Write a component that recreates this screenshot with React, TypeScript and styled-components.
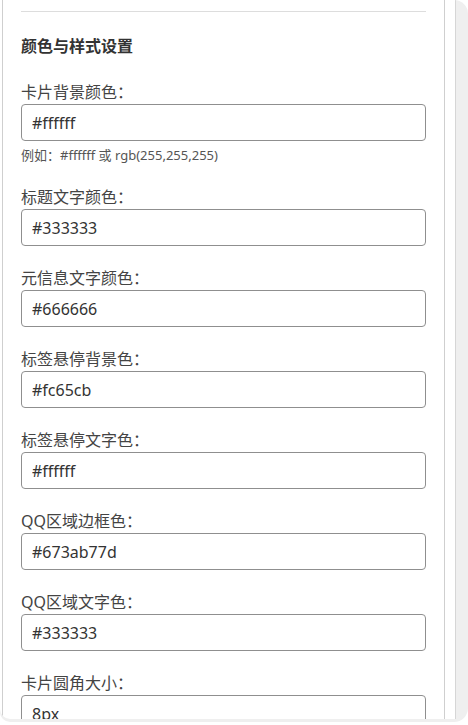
import styled, { createGlobalStyle } from "styled-components"

type Field = {
  label: string
  value: string
  hint?: string
}

const fields: Field[] = [
  { label: "卡片背景颜色：", value: "#ffffff", hint: "例如：#ffffff 或 rgb(255,255,255)" },
  { label: "标题文字颜色：", value: "#333333" },
  { label: "元信息文字颜色：", value: "#666666" },
  { label: "标签悬停背景色：", value: "#fc65cb" },
  { label: "标签悬停文字色：", value: "#ffffff" },
  { label: "QQ区域边框色：", value: "#673ab77d" },
  { label: "QQ区域文字色：", value: "#333333" },
  { label: "卡片圆角大小：", value: "8px" },
]

export default function App() {
  return (
    <>
      <GlobalStyle />
      <Frame>
        <Window>
          <Panel>
            <Section>
              <Heading>颜色与样式设置</Heading>
              {fields.map((f) => (
                <FieldGroup key={f.label}>
                  <Label>{f.label}</Label>
                  <Input type="text" defaultValue={f.value} readOnly />
                  {f.hint && <Hint>{f.hint}</Hint>}
                </FieldGroup>
              ))}
            </Section>
          </Panel>
        </Window>
      </Frame>
    </>
  )
}

const GlobalStyle = createGlobalStyle`
  html, body {
    margin: 0;
    padding: 0;
    background: #ffffff;
    overflow: hidden;
  }
  body {
    font-family: "Noto Sans", "Noto Sans CJK SC", sans-serif;
  }
`

const Frame = styled.div`
  width: 468px;
  height: 722px;
  box-sizing: border-box;
  padding: 0 12px 3px 0;
  background: #efefef;
  border-radius: 0 14px 14px 10px;
  overflow: hidden;
`

const Window = styled.div`
  width: 456px;
  height: 100%;
  box-sizing: border-box;
  padding-left: 2px;
  background: #ffffff;
  border-right: 1px solid #d6d6d6;
  border-bottom-left-radius: 10px;
  overflow: hidden;
`

const Panel = styled.div`
  width: 443px;
  height: 100%;
  box-sizing: border-box;
  padding: 0 18px;
  border-left: 1px solid #cfcfcf;
  border-right: 1px solid #cfcfcf;
  overflow: hidden;
`

const Section = styled.section`
  margin-top: 11px;
  padding-top: 22px;
  border-top: 1px solid #dddddd;
`

const Heading = styled.h3`
  margin: 0 0 22px;
  height: 24px;
  font-size: 16px;
  line-height: 24px;
  font-weight: 700;
  color: #333333;
`

const FieldGroup = styled.div`
  margin-bottom: 20px;
`

const Label = styled.label`
  display: block;
  height: 24px;
  font-size: 16px;
  line-height: 24px;
  color: #444444;
`

const Input = styled.input`
  display: block;
  width: 100%;
  height: 37px;
  box-sizing: border-box;
  margin: 0;
  padding: 0 10px;
  border: 1px solid #8f8f8f;
  border-radius: 4px;
  background: #ffffff;
  font-family: "Noto Sans", "Noto Sans CJK SC", sans-serif;
  font-size: 16px;
  color: #333333;
  outline: none;
`

const Hint = styled.div`
  margin-top: 4px;
  height: 20px;
  font-size: 13px;
  line-height: 20px;
  color: #555555;
`
